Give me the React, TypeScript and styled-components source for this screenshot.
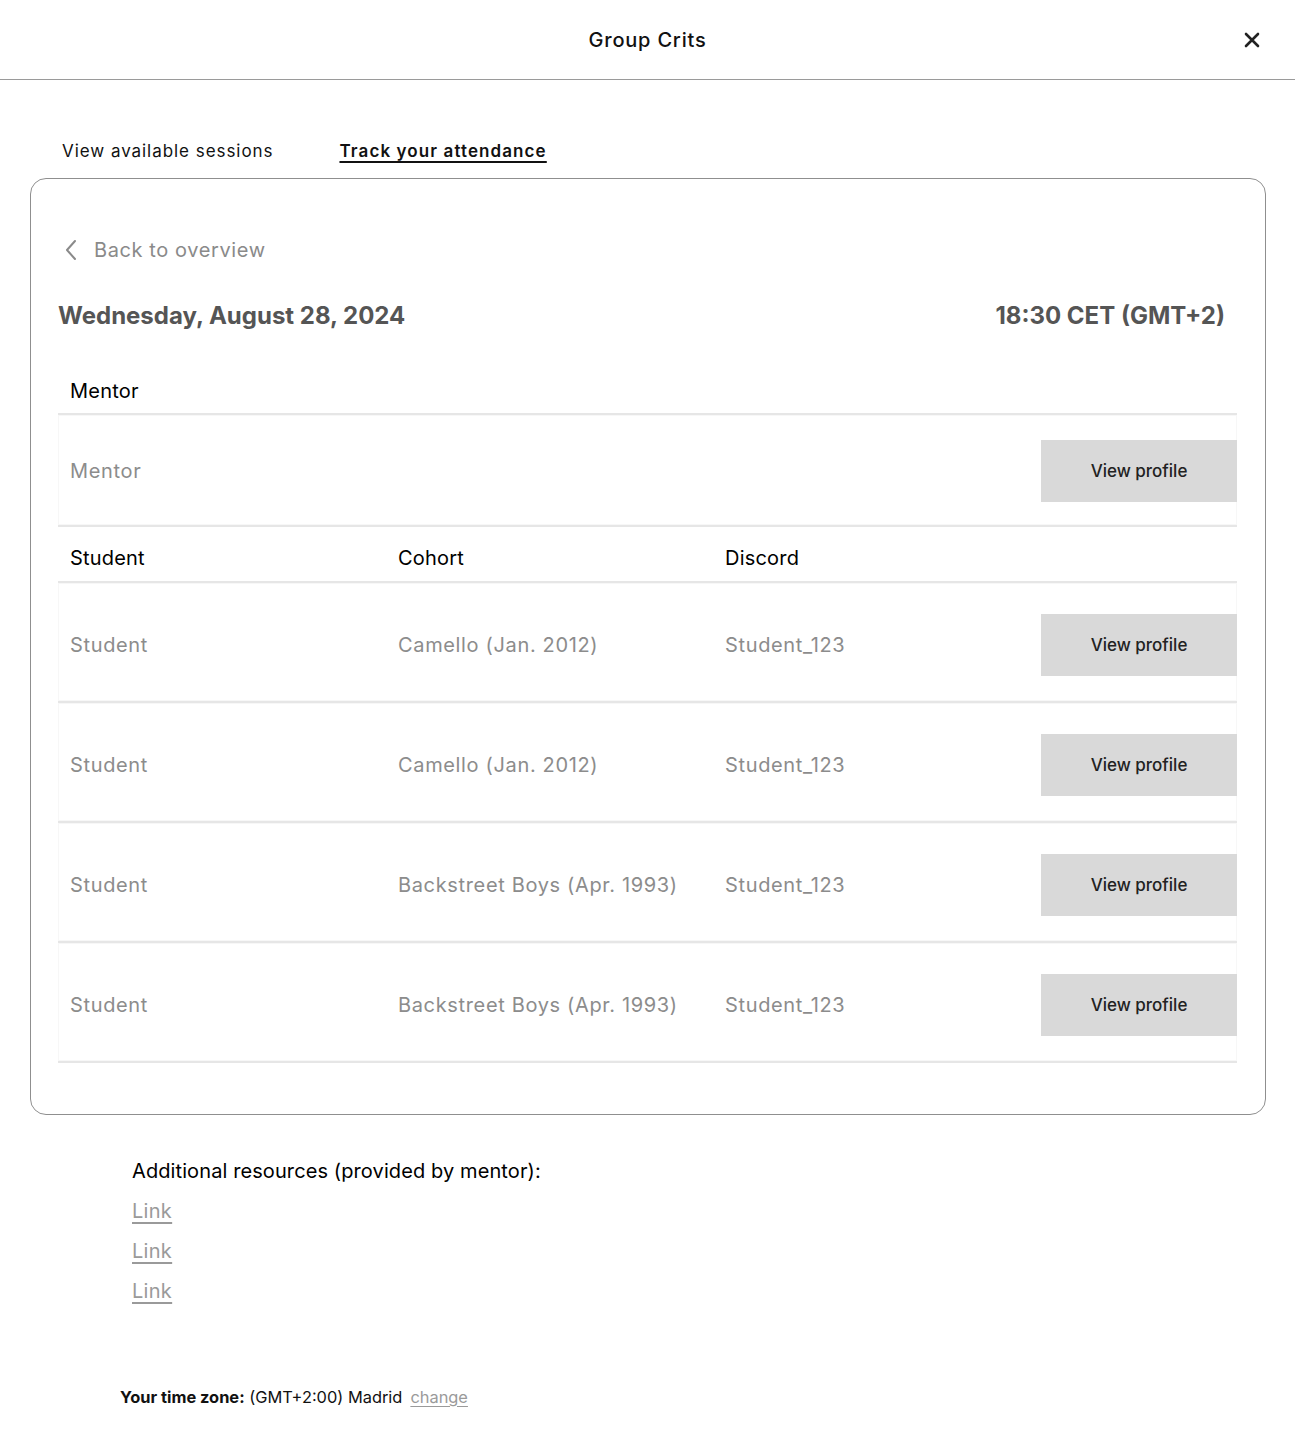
import React from "react";
import styled, { createGlobalStyle } from "styled-components";

const GlobalStyle = createGlobalStyle`
  body {
    margin: 0;
    font-family: Inter, "Noto Sans", sans-serif;
    background: #fff;
    color: #000;
  }
`;

const StyledHeader = styled.header`
  height: 79px;
  border-bottom: 1px solid #9a9a9a;
  display: flex;
  align-items: center;
  justify-content: center;
  position: relative;
`;

const StyledTitle = styled.h1`
  margin: 1px 0 0 0;
  font-size: 20px;
  font-weight: 500;
  letter-spacing: 0.8px;
  color: #111;
`;

const StyledClose = styled.button`
  position: absolute;
  right: 34px;
  top: 31px;
  width: 18px;
  height: 18px;
  padding: 0;
  border: none;
  background: none;
  cursor: pointer;
  display: flex;
`;

const StyledTabs = styled.nav`
  display: flex;
  gap: 66px;
  padding: 59px 0 0 62px;
  height: 39px;
`;

const StyledTab = styled.span<{ $active?: boolean }>`
  font-size: 17px;
  letter-spacing: ${(p) => (p.$active ? "1.1px" : "0.95px")};
  line-height: 24px;
  font-weight: ${(p) => (p.$active ? 600 : 400)};
  color: #111;
  text-decoration: ${(p) => (p.$active ? "underline" : "none")};
  text-underline-offset: 4px;
  text-decoration-thickness: 1.5px;
  cursor: pointer;
`;

const StyledCard = styled.section`
  margin: 0 29px 0 30px;
  border: 1px solid #8f8f8f;
  border-radius: 16px;
  padding: 56px 28px 51px 27px;
`;

const StyledBack = styled.a`
  display: flex;
  align-items: center;
  gap: 16px;
  padding-left: 6px;
  font-size: 20px;
  color: #8a8a8a;
  letter-spacing: 0.6px;
  line-height: 30px;
  cursor: pointer;
`;

const StyledDateRow = styled.div`
  display: flex;
  justify-content: space-between;
  align-items: center;
  padding: 36px 12px 0 0;
  font-size: 24px;
  font-weight: 700;
  color: #555;
  line-height: 30px;
`;

const StyledHeadRow = styled.div<{ $height: number; $top: number }>`
  display: grid;
  grid-template-columns: 328px 327px 1fr 196px;
  align-items: center;
  height: ${(p) => p.$height}px;
  padding: ${(p) => p.$top}px 0 0 12px;
  border-bottom: 2px solid #e6e6e6;
  font-size: 20px;
  letter-spacing: 0.2px;
  color: #000;
`;

const StyledRow = styled.div<{ $height: number; $top: number }>`
  display: grid;
  grid-template-columns: 328px 327px 1fr 196px;
  align-items: center;
  height: ${(p) => p.$height}px;
  padding: ${(p) => p.$top}px 0 0 12px;
  border-bottom: 2px solid #e6e6e6;
  box-shadow: inset 0 0 0 1px #f7f7f7;
  font-size: 20px;
  color: #8c8c8c;
  letter-spacing: 0.65px;
`;

const StyledButton = styled.button`
  grid-column: 4;
  height: 62px;
  border: none;
  background: #d9d9d9;
  font-family: Inter, "Noto Sans", sans-serif;
  font-size: 17px;
  font-weight: 500;
  color: #222;
  cursor: pointer;
`;

const StyledResources = styled.div`
  padding: 44px 0 0 132px;
  display: flex;
  flex-direction: column;
  gap: 16px;
`;

const StyledResourcesTitle = styled.div`
  font-size: 20px;
  letter-spacing: 0.1px;
  color: #000;
  line-height: 24px;
`;

const StyledLink = styled.a`
  font-size: 20px;
  letter-spacing: 0.3px;
  line-height: 24px;
  color: #9a9a9a;
  text-decoration: underline;
  text-underline-offset: 4px;
  width: fit-content;
  cursor: pointer;
`;

const StyledTimeZone = styled.div`
  padding: 84px 0 0 120px;
  font-size: 16.4px;
  line-height: 20px;
  color: #111;
`;

const StyledChange = styled.a`
  margin-left: 8px;
  color: #9a9a9a;
  text-decoration: underline;
  text-underline-offset: 3px;
  cursor: pointer;
`;

const students = [
  { name: "Student", cohort: "Camello (Jan. 2012)", discord: "Student_123" },
  { name: "Student", cohort: "Camello (Jan. 2012)", discord: "Student_123" },
  { name: "Student", cohort: "Backstreet Boys (Apr. 1993)", discord: "Student_123" },
  { name: "Student", cohort: "Backstreet Boys (Apr. 1993)", discord: "Student_123" },
];

export default function App(): JSX.Element {
  return (
    <>
      <GlobalStyle />
      <StyledHeader>
        <StyledTitle>Group Crits</StyledTitle>
        <StyledClose aria-label="Close">
          <svg width="18" height="18" viewBox="0 0 18 18">
            <path d="M3 3L15 15M15 3L3 15" stroke="#222" strokeWidth="2.6" strokeLinecap="round" />
          </svg>
        </StyledClose>
      </StyledHeader>
      <StyledTabs>
        <StyledTab>View available sessions</StyledTab>
        <StyledTab $active>Track your attendance</StyledTab>
      </StyledTabs>
      <StyledCard>
        <StyledBack>
          <svg width="14" height="22" viewBox="0 0 14 22">
            <path d="M11 2L3 11L11 20" stroke="#8a8a8a" strokeWidth="2" fill="none" strokeLinecap="round" strokeLinejoin="round" />
          </svg>
          Back to overview
        </StyledBack>
        <StyledDateRow>
          <span>Wednesday, August 28, 2024</span>
          <span>18:30 CET (GMT+2)</span>
        </StyledDateRow>
        <StyledHeadRow $height={45} $top={37}>
          <span>Mentor</span>
        </StyledHeadRow>
        <StyledRow $height={108} $top={2}>
          <span>Mentor</span>
          <StyledButton>View profile</StyledButton>
        </StyledRow>
        <StyledHeadRow $height={47} $top={7}>
          <span>Student</span>
          <span>Cohort</span>
          <span>Discord</span>
        </StyledHeadRow>
        {students.map((s, i) => (
          <StyledRow $height={112} $top={6} key={i}>
            <span>{s.name}</span>
            <span>{s.cohort}</span>
            <span>{s.discord}</span>
            <StyledButton>View profile</StyledButton>
          </StyledRow>
        ))}
      </StyledCard>
      <StyledResources>
        <StyledResourcesTitle>Additional resources (provided by mentor):</StyledResourcesTitle>
        <StyledLink>Link</StyledLink>
        <StyledLink>Link</StyledLink>
        <StyledLink>Link</StyledLink>
      </StyledResources>
      <StyledTimeZone>
        <b>Your time zone:</b> (GMT+2:00) Madrid
        <StyledChange>change</StyledChange>
      </StyledTimeZone>
    </>
  );
}
